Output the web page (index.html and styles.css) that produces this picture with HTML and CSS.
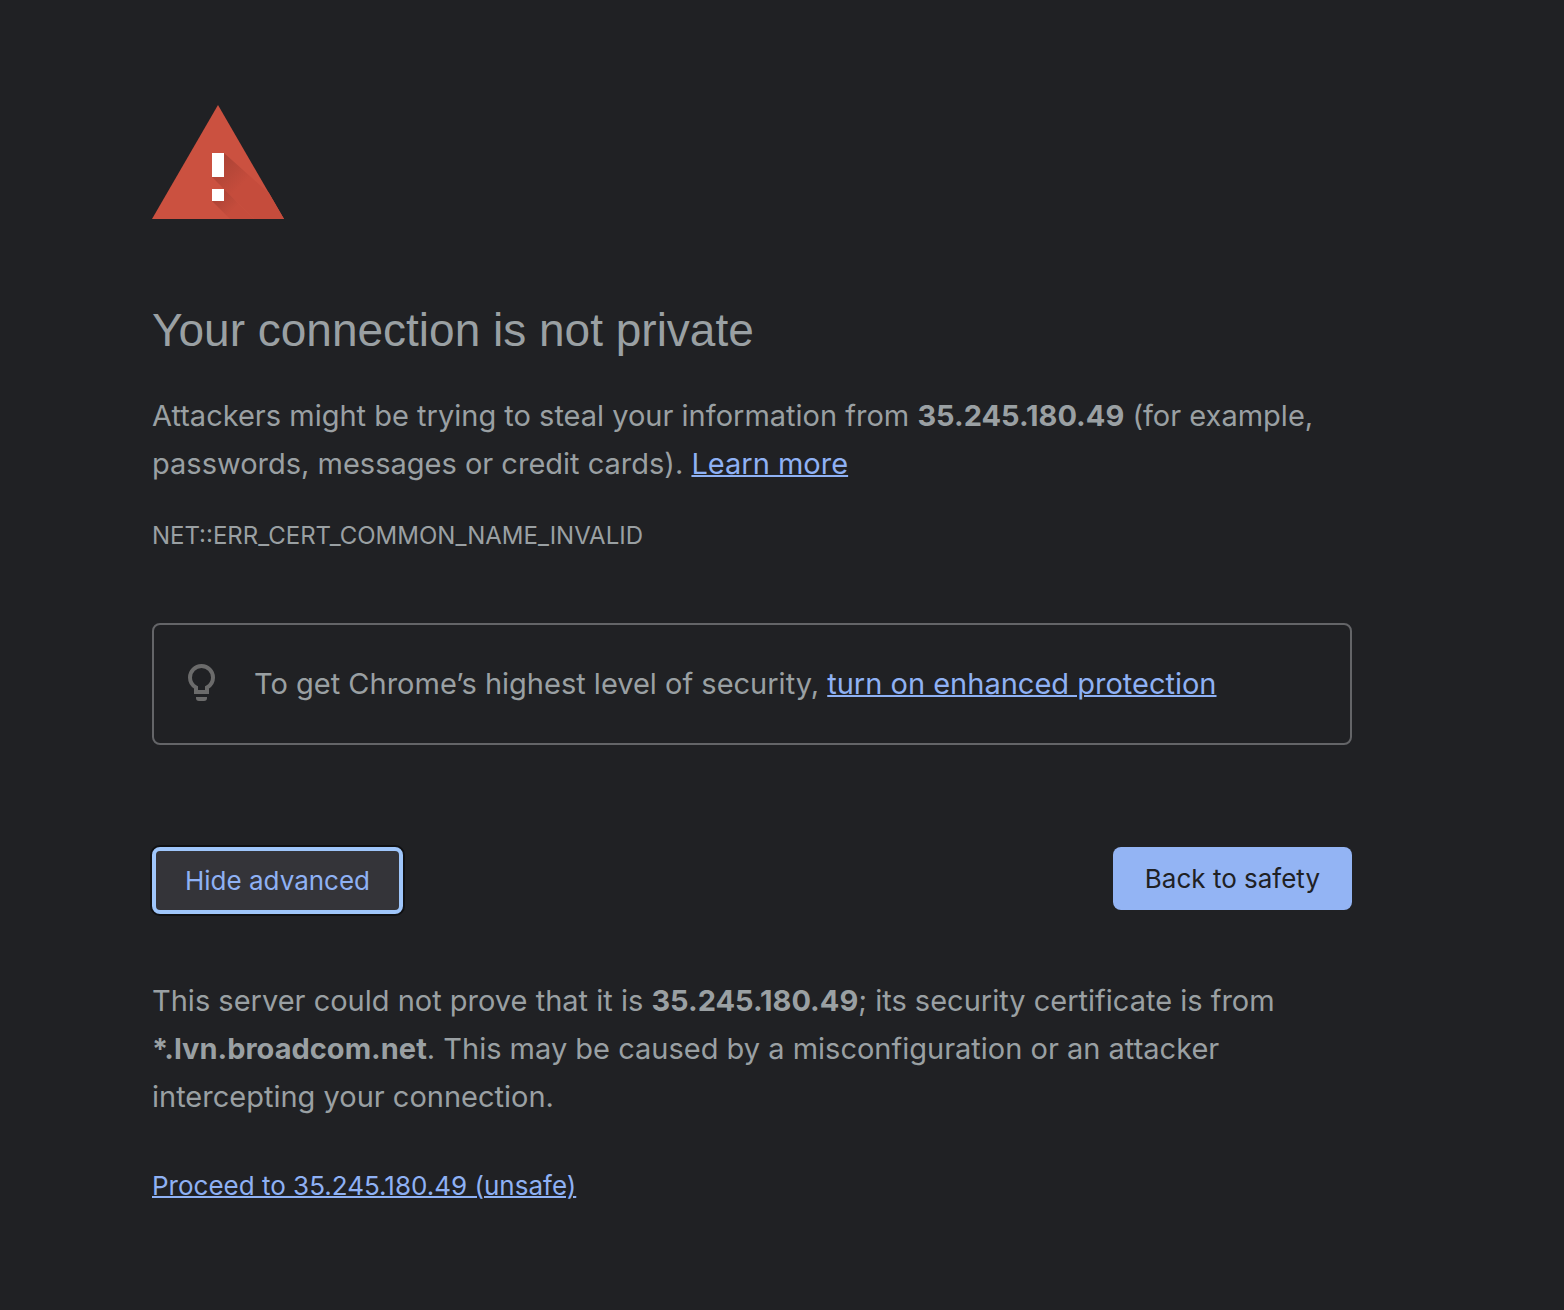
FILE: index.html
```html
<!DOCTYPE html>
<html lang="en">
<head>
<meta charset="utf-8">
<title>Privacy error</title>
<link rel="stylesheet" href="styles.css">
</head>
<body>
<main class="interstitial">
  <svg class="warning-icon" viewBox="0 0 132 114" aria-hidden="true">
    <defs>
      <linearGradient id="bar-shade" gradientUnits="userSpaceOnUse" x1="66" y1="60" x2="88" y2="82">
        <stop offset="0" stop-color="#ae4436"/>
        <stop offset="1" stop-color="#c54c3c"/>
      </linearGradient>
      <linearGradient id="dot-shade" gradientUnits="userSpaceOnUse" x1="66" y1="90" x2="81" y2="105">
        <stop offset="0" stop-color="#ae4436"/>
        <stop offset="1" stop-color="#c54c3c"/>
      </linearGradient>
    </defs>
    <path d="M66 0 132 114H0z" fill="#cb5140"/>
    <path d="M72 48 117 88 132 114H102L60 72z" fill="url(#bar-shade)"/>
    <path d="M72 84 102 114H78L60 96z" fill="url(#dot-shade)"/>
    <path d="M60 48h12v24H60zM60 84h12v12H60z" fill="#fff"/>
  </svg>
  <h1 class="title">Your connection is not private</h1>
  <p class="message">Attackers might be trying to steal your information from <strong>35.245.180.49</strong> (for example, passwords, messages or credit cards). <a href="#learn">Learn more</a></p>
  <p class="error-code">NET::ERR_CERT_COMMON_NAME_INVALID</p>
  <div class="promo">
    <svg class="bulb-icon" viewBox="0 0 48 48" aria-hidden="true">
      <path d="M18 37h11v1a3 3 0 0 1-3 3h-5a3 3 0 0 1-3-3z" fill="#6b6b6b"/>
      <path d="M18 32v-4.500C14.500 25.500 12 22 12 17.500a11.500 11.500 0 0 1 23 0c0 4.500-2.500 8-6 10V32z" fill="none" stroke="#6b6b6b" stroke-width="4"/>
    </svg>
    <p class="promo-text">To get Chrome’s highest level of security, <a href="#enhanced">turn on enhanced protection</a></p>
  </div>
  <div class="actions">
    <button class="button secondary" type="button">Hide advanced</button>
    <button class="button primary" type="button">Back to safety</button>
  </div>
  <p class="message details">This server could not prove that it is <strong>35.245.180.49</strong>; its security certificate is from <strong>*.lvn.broadcom.net</strong>. This may be caused by a misconfiguration or an attacker intercepting your connection.</p>
  <a class="proceed" href="#proceed">Proceed to 35.245.180.49 (unsafe)</a>
</main>
</body>
</html>
```

FILE: styles.css
```css
* { box-sizing: border-box; }
body {
  margin: 0;
  background: #202124;
  color: #9aa0a3;
  font-family: Inter, "Liberation Sans", sans-serif;
  font-size: 29px;
  line-height: 48px;
}
a { color: #8fb1f4; text-decoration-thickness: 2px; }
p { margin: 0; }
.interstitial {
  max-width: 1200px;
  margin: 105px 212px 96px 152px;
}
.warning-icon { display: block; width: 132px; height: 114px; }
.title {
  margin: 81px 0 32px;
  font-family: "Liberation Sans", Arial, sans-serif;
  font-size: 46px;
  font-weight: 400;
  line-height: 60px;
}
.error-code { margin-top: 24px; font-size: 24px; }
.promo {
  display: flex;
  align-items: center;
  gap: 28px;
  margin-top: 63px;
  padding: 35px 24px;
  border: 2px solid #646568;
  border-radius: 8px;
}
.bulb-icon { flex: none; width: 48px; height: 48px; }
.actions {
  display: flex;
  justify-content: space-between;
  align-items: flex-start;
  margin-top: 102px;
}
.button {
  border-radius: 8px;
  font: inherit;
  font-size: 26px;
  line-height: 30px;
}
.primary { padding: 17px 32px 16px; border: 0; background: #93b4f4; color: #202124; }
.secondary {
  padding: 15px 29px 14px;
  border: 4px solid #9fc6fb;
  background: #343439;
  color: #8fb1f4;
  box-shadow: 0 0 0 2px #101113;
}
.details { margin-top: 63px; }
.proceed { display: inline-block; margin-top: 41px; font-size: 26px; }
```
